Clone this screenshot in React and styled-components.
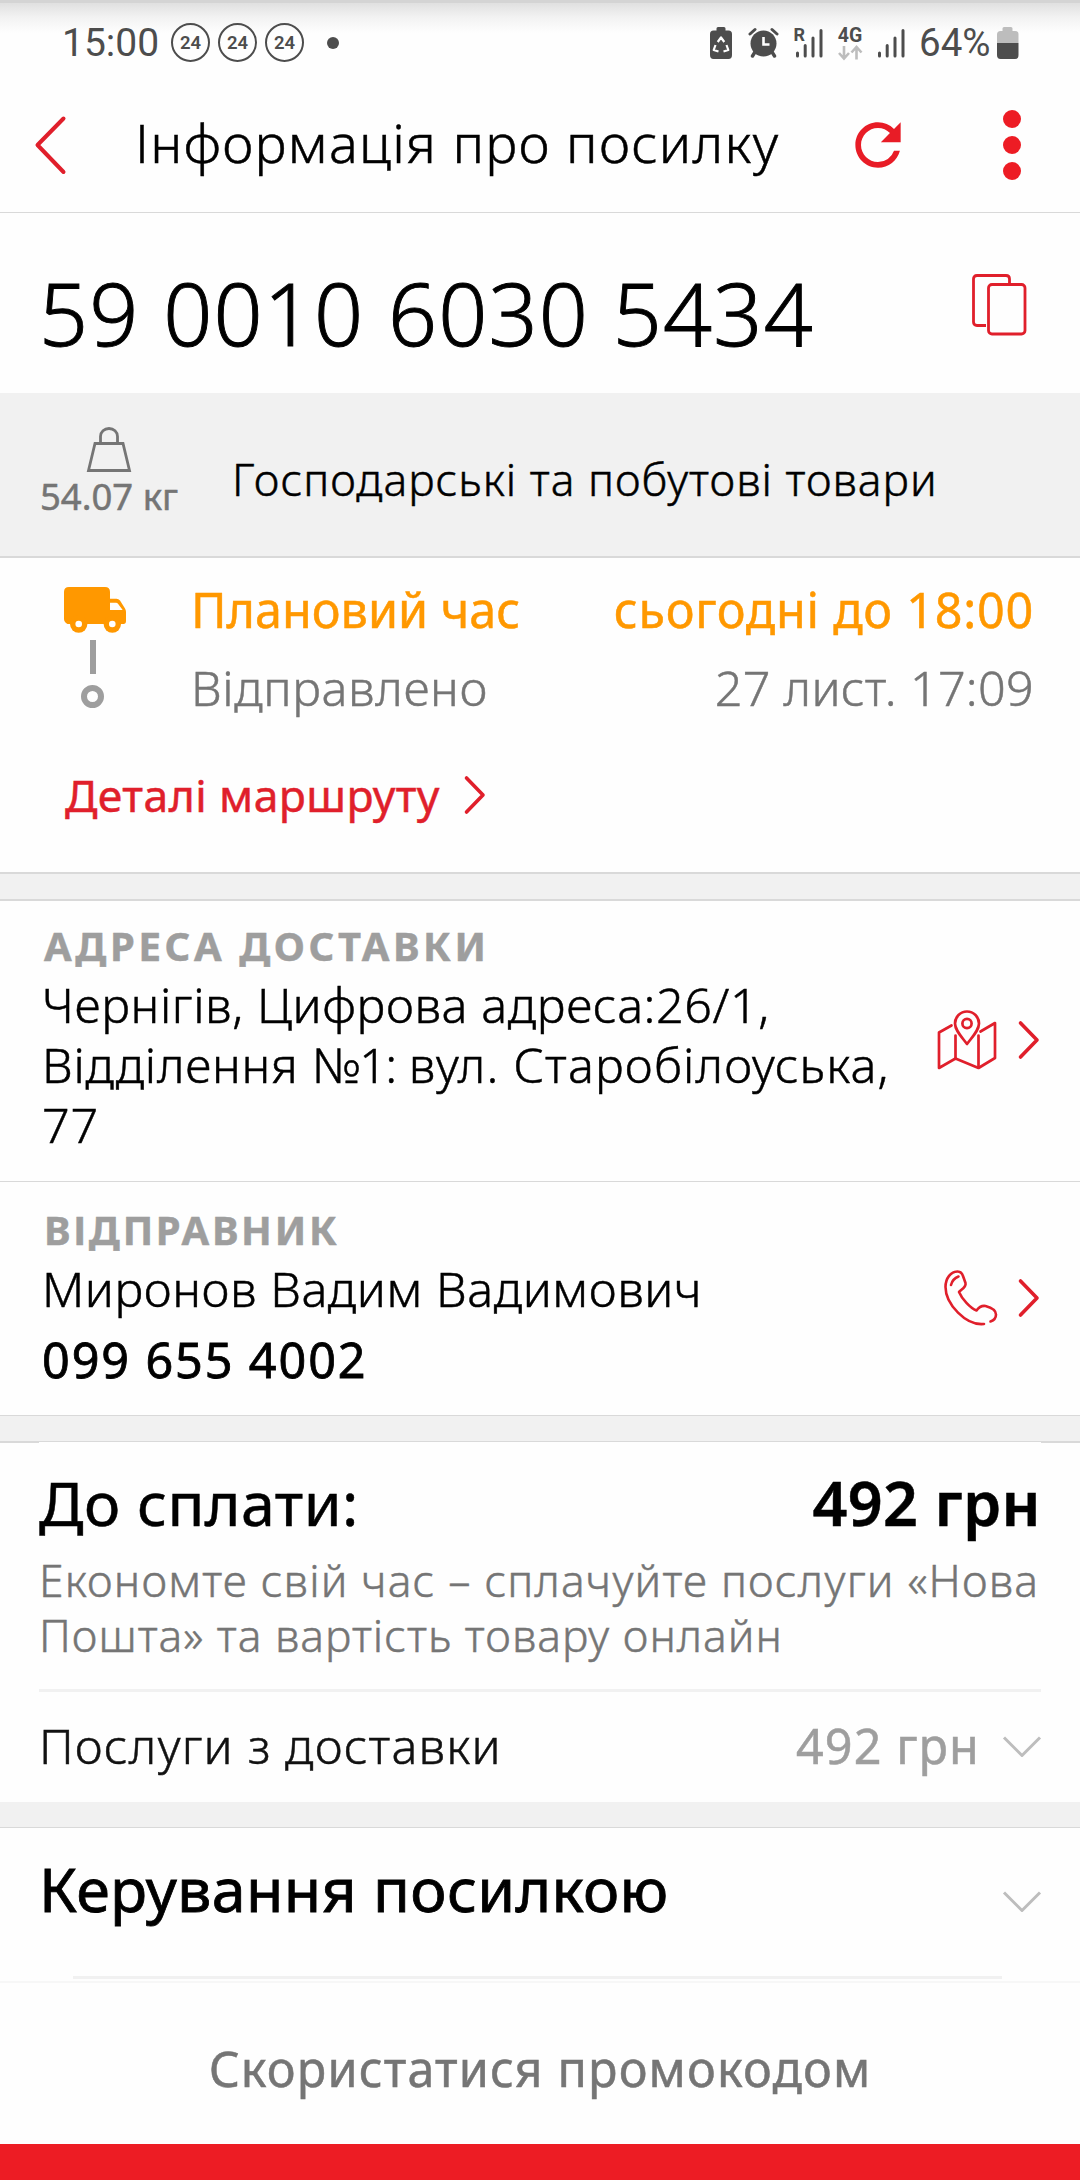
import React from "react"
import styled, { createGlobalStyle } from "styled-components"
import { MdRefresh } from "react-icons/md"

const red = "#e01f2b"
const line = "#d9d9d9"
const band = "#f1f1f1"
const grey = "#757575"
const lightGrey = "#9e9e9e"
const orange = "#ff9800"
const dark = "#4d4d4d"

const ChevronRight = () => (
  <svg width="22" height="40" viewBox="0 0 22 40" fill="none" stroke={red} strokeWidth="3.6" strokeLinecap="round" strokeLinejoin="round">
    <path d="M2.5 3L19 20L2.5 37" />
  </svg>
)

const ChevronDown = () => (
  <svg width="38" height="22" viewBox="0 0 38 22" fill="none" stroke="#bdbdbd" strokeWidth="3" strokeLinejoin="round">
    <path d="M1 1.5L19 19.5L37 1.5" />
  </svg>
)

const Signal = ({ roaming }) => (
  <svg width="30" height="34" viewBox="0 0 30 34">
    <path d="M3.500 27V30M11.200 19.500V30M19 12V30M27 4.500V30" stroke={dark} strokeWidth="3" strokeLinecap="round" />
    {roaming && (
      <text x="-0.500" y="15" fontFamily="Roboto" fontWeight="700" fontSize="18" fill={dark}>R</text>
    )}
  </svg>
)

const App = () => (
  <Screen>
    <GlobalStyle />
    <StatusBar>
      <Clock>15:00</Clock>
      <Notices>
        <Notice>24</Notice>
        <Notice>24</Notice>
        <Notice>24</Notice>
      </Notices>
      <Dot />
      <StatusIcons>
        <svg width="22" height="32" viewBox="0 0 22 32">
          <path d="M6.500 1.500Q6.500 0 8 0H14Q15.500 0 15.500 1.500V3.500H18.500Q22 3.500 22 7V28Q22 32 18.500 32H3.500Q0 32 0 28V7Q0 3.500 3.500 3.500H6.500Z" fill={dark} />
          <path d="M7.700 15L11 10.500L14.300 15M16.500 18L18.300 23L13.500 24.500M8.500 24.500L3.700 23L5.500 18" fill="none" stroke="#fff" strokeWidth="2.2" strokeLinejoin="round" />
        </svg>
        <svg width="29" height="30" viewBox="0 0 29 30">
          <circle cx="14.500" cy="15.500" r="13" fill={dark} />
          <path d="M1 6L6 1.500M28 6L23 1.500" stroke={dark} strokeWidth="3" strokeLinecap="round" />
          <path d="M6 24L3.500 28M23 24L25.500 28" stroke={dark} strokeWidth="3.400" strokeLinecap="round" />
          <path d="M14.500 9V16.500H20.500" fill="none" stroke="#fff" strokeWidth="2.600" />
        </svg>
        <Signal roaming />
        <svg width="27" height="34" viewBox="0 0 27 34">
          <text x="0.800" y="15.500" fontFamily="Roboto" fontWeight="700" fontSize="19.500" fill={dark}>4G</text>
          <path d="M7 20V32M2 27L7 32.500L12 27M19.500 33.500V21M14.500 26.500L19.500 21L24.500 26.500" fill="none" stroke="#bdbdbd" strokeWidth="2.600" />
        </svg>
        <Signal />
        <Percent>64%</Percent>
        <svg width="22" height="32" viewBox="0 0 22 32">
          <path d="M5.500 1.500Q5.500 0 7 0H14Q15.500 0 15.500 1.500V4H18Q21.500 4 21.500 7.500V16H0V7.500Q0 4 3.500 4H5.500Z" fill="#bdbdbd" />
          <path d="M0 16H21.500V28Q21.500 32 18 32H3.500Q0 32 0 28Z" fill={dark} />
        </svg>
      </StatusIcons>
    </StatusBar>

    <Header>
      <svg width="32" height="58" viewBox="0 0 32 58" fill="none" stroke={red} strokeWidth="4" strokeLinecap="round" strokeLinejoin="round">
        <path d="M28.500 2.500L2.500 29L28.500 56" />
      </svg>
      <Title>Інформація про посилку</Title>
      <MdRefresh size={68} color="#e81c26" />
      <Menu>
        <MenuDot />
        <MenuDot />
        <MenuDot />
      </Menu>
    </Header>

    <NumberRow>
      <Number>59 0010 6030 5434</Number>
      <svg width="56" height="62" viewBox="0 0 56 62" fill="none" stroke={red} strokeWidth="2.800">
        <path d="M15 51.500H6Q2.500 51.500 2.500 48V5Q2.500 1.500 6 1.500H35Q38.500 1.500 38.500 5V10" />
        <rect x="17.500" y="10.500" width="36.500" height="49.500" rx="3.500" />
      </svg>
    </NumberRow>

    <Cargo>
      <Weight>
        <svg width="44" height="45" viewBox="0 0 44 45" fill="none" stroke={grey} strokeWidth="2.800">
          <path d="M8 16.500H36L42.500 43.500H1.500Z" />
          <path d="M13.500 16V9.500A8.500 8 0 0 1 30.500 9.500V16" />
        </svg>
        <WeightText>54.07 кг</WeightText>
      </Weight>
      <CargoText>Господарські та побутові товари</CargoText>
    </Cargo>

    <Route>
      <RouteTop>
        <Rail>
          <svg width="62" height="46" viewBox="0 0 62 46">
            <path fillRule="evenodd" fill={orange} d="M5 0H41Q46 0 46 5V11.700H52.500Q54.500 11.700 56 13.500L61 21.500Q62 23 62 25V34Q62 37 59.500 37H3.500Q0 35 0 32V5Q0 0 5 0ZM46 15.800V23H58.700L54 16.800Q53.200 15.800 52 15.800Z" />
            <circle cx="14.700" cy="37" r="8.700" fill={orange} />
            <circle cx="48.300" cy="37" r="8.700" fill={orange} />
            <circle cx="14.700" cy="37" r="3.300" fill="#fff" />
            <circle cx="48.300" cy="37" r="3.300" fill="#fff" />
          </svg>
          <RailLine />
          <RailRing />
        </Rail>
        <Steps>
          <Step $color={orange} $weight={400}>
            <Tracked $track={0}>Плановий час</Tracked>
            <Tracked $track={0.75}>сьогодні до 18:00</Tracked>
          </Step>
          <Step $color={grey} $weight={300}>
            <Tracked $track={0.62}>Відправлено</Tracked>
            <Tracked $track={0.3}>27 лист. 17:09</Tracked>
          </Step>
        </Steps>
      </RouteTop>
      <RouteLink>
        Деталі маршруту
        <ChevronRight />
      </RouteLink>
    </Route>

    <Band $top={2} $bottom={2} />

    <Contact $height={281} $top={21} $border>
      <ContactBody>
        <Label $track={3.6}>АДРЕСА ДОСТАВКИ</Label>
        <Address>
          <Tracked $track={0.6}>Чернігів, Цифрова адреса:26/1,</Tracked> Відділення{" "}
          <Tracked $track={-1.8}>№1:</Tracked> <Tracked $track={1.15}>вул. Старобілоуська,</Tracked> 77
        </Address>
      </ContactBody>
      <Actions $gap={21}>
        <svg width="60" height="60" viewBox="0 0 60 60" fill="none" stroke={red} strokeWidth="2.700" strokeLinecap="round" strokeLinejoin="round">
          <path d="M14.500 15.500L2 22.500V58L18.500 48.500L41.500 58L58 48V13L43.500 21.500" />
          <path d="M18.500 25.500V48M41.500 25.500V57.500" />
          <path d="M30 34C24 26 18 20 18 13.500A12 12 0 0 1 42 13.500C42 20 36 26 30 34Z" />
          <circle cx="30" cy="13.500" r="4.600" />
        </svg>
        <ChevronRight />
      </Actions>
    </Contact>

    <Contact $height={233} $top={23.5}>
      <ContactBody>
        <Label $track={2.73}>ВІДПРАВНИК</Label>
        <Name>Миронов Вадим Вадимович</Name>
        <Phone>099 655 4002</Phone>
      </ContactBody>
      <Actions $gap={20}>
        <svg width="54" height="56" viewBox="0 0 54 56" fill="none" stroke={red} strokeWidth="2.600" strokeLinecap="round" strokeLinejoin="round">
          <path d="M40 54C22 56 1.500 34 1.500 17C1.500 8 7 1.500 13.500 1.500C16.500 1.500 18 3 19 6L21.500 13C22.500 17 18 19 15 22C18 29 26 38 32.500 40.500C35 37 38 35.500 41.500 36C47 37.500 52 40.500 52 44.500C52 48 49.500 50.500 46.500 51.500" />
          <path d="M7 15C8 11 10.500 8 14.500 6.500" />
        </svg>
        <ChevronRight />
      </Actions>
    </Contact>

    <Band $top={1} $bottom={1} />

    <Payment>
      <Total>
        <TotalLabel>До сплати:</TotalLabel>
        <TotalSum>492 грн</TotalSum>
      </Total>
      <Hint>
        Економте свій час – сплачуйте послуги «Нова
        <br />
        <Tracked $track={1}>Пошта» та вартість товару онлайн</Tracked>
      </Hint>
      <Service>
        <ServiceName>Послуги з доставки</ServiceName>
        <ServiceSum>492 грн</ServiceSum>
        <ServiceArrow>
          <ChevronDown />
        </ServiceArrow>
      </Service>
    </Payment>

    <Band $top={0} $bottom={1} />

    <Manage>
      <ManageRow>
        <ManageTitle>Керування посилкою</ManageTitle>
        <ManageArrow>
          <ChevronDown />
        </ManageArrow>
      </ManageRow>
      <ManageLine />
    </Manage>

    <Promo>Скористатися промокодом</Promo>
    <BottomBar />
  </Screen>
)

export default App

const GlobalStyle = createGlobalStyle`
  * {
    box-sizing: border-box;
  }

  body {
    margin: 0;
    background: #fefefe;
    font-family: "Noto Sans", sans-serif;
    font-weight: 300;
    color: #000;
    white-space: nowrap;
    -webkit-text-stroke: 0.5px;
  }

  svg {
    display: block;
    flex: none;
    overflow: visible;
    -webkit-text-stroke: 0;
  }
`

const Screen = styled.div`
  width: 1080px;
  height: 2180px;
  overflow: hidden;
  display: flex;
  flex-direction: column;
`

const StatusBar = styled.div`
  height: 85px;
  flex: none;
  display: flex;
  align-items: center;
  padding: 0 61px 3px 62px;
  border-top: 3px solid #d4d4d4;
  background: linear-gradient(#e0e0e0, #f2f2f2 14px, #fefefe 30px);
  font-family: Roboto, sans-serif;
  font-weight: 400;
  color: ${dark};
  -webkit-text-stroke: 0;
`

const Clock = styled.div`
  width: 109px;
  font-size: 39px;
  line-height: 40px;
`

const Notices = styled.div`
  display: flex;
  gap: 8px;
`

const Notice = styled.div`
  width: 39px;
  height: 39px;
  border: 2px solid ${dark};
  border-radius: 50%;
  font-size: 18.5px;
  font-weight: 600;
  line-height: 36px;
  text-align: center;
`

const Dot = styled.div`
  width: 12px;
  height: 12px;
  margin-left: 23px;
  border-radius: 50%;
  background: ${dark};
`

const StatusIcons = styled.div`
  display: grid;
  grid-template-columns: 39px 45px 43px 39px 43px 78px 22px;
  align-items: center;
  margin-left: auto;
`

const Percent = styled.div`
  font-size: 38.5px;
  line-height: 40px;
`

const Header = styled.header`
  height: 128px;
  flex: none;
  display: flex;
  align-items: center;
  padding: 0 59px 7px 35px;
  border-bottom: 1px solid ${line};
`

const Title = styled.h1`
  width: 777px;
  margin: 0 0 6px;
  padding-left: 68px;
  font-size: 54px;
  font-weight: 300;
  line-height: 70px;
  letter-spacing: 1.25px;
`

const Menu = styled.div`
  display: flex;
  flex-direction: column;
  gap: 8px;
  margin-left: auto;
`

const MenuDot = styled.div`
  width: 18px;
  height: 18px;
  border-radius: 50%;
  background: #ed1c24;
`

const NumberRow = styled.div`
  height: 180px;
  flex: none;
  display: flex;
  align-items: center;
  justify-content: space-between;
  padding: 4px 53px 0 39px;
`

const Number = styled.div`
  padding-top: 15px;
  font-size: 86px;
  line-height: 100px;
  letter-spacing: 1.2px;
  -webkit-text-stroke: 0.9px;
`

const Cargo = styled.div`
  height: 165px;
  flex: none;
  display: flex;
  padding-left: 39px;
  background: ${band};
  border-bottom: 2px solid ${line};
`

const Weight = styled.div`
  width: 140px;
  display: flex;
  flex-direction: column;
  align-items: center;
  padding-top: 34px;
  color: ${grey};
`

const WeightText = styled.div`
  margin-top: 4px;
  font-size: 36.5px;
  font-weight: 400;
  line-height: 40px;
`

const CargoText = styled.div`
  margin: 56px 0 0 53px;
  font-size: 44.5px;
  line-height: 60px;
  letter-spacing: 1px;
`

const Route = styled.section`
  height: 314px;
  flex: none;
  padding: 12px 46px 0 64px;
`

const RouteTop = styled.div`
  display: flex;
`

const Rail = styled.div`
  width: 62px;
  display: flex;
  flex-direction: column;
  align-items: center;
  padding-top: 17px;
`

const RailLine = styled.div`
  width: 6px;
  height: 34px;
  margin: 7px 4px 11px 0;
  background: ${lightGrey};
`

const RailRing = styled.div`
  width: 23px;
  height: 23px;
  margin-right: 5px;
  border: 6px solid ${lightGrey};
  border-radius: 50%;
`

const Steps = styled.div`
  flex: 1;
  padding-left: 65px;
`

const Step = styled.div`
  display: flex;
  justify-content: space-between;
  font-size: 48.5px;
  font-weight: ${(p) => p.$weight};
  line-height: 78px;
  color: ${(p) => p.$color};
`

const Tracked = styled.span`
  letter-spacing: ${(p) => p.$track}px;
`

const RouteLink = styled.div`
  display: flex;
  align-items: center;
  gap: 24px;
  margin-top: 39px;
  padding-left: 1px;
  font-size: 44.5px;
  font-weight: 400;
  line-height: 60px;
  letter-spacing: 0.42px;
  color: ${red};
`

const Band = styled.div`
  height: ${(p) => 25 + p.$top + p.$bottom}px;
  flex: none;
  background: ${band};
  border-style: solid;
  border-color: ${line};
  border-width: ${(p) => p.$top}px 0 ${(p) => p.$bottom}px;
`

const Contact = styled.section`
  height: ${(p) => p.$height}px;
  flex: none;
  display: flex;
  justify-content: space-between;
  padding: 0 40px 0 42px;
  border-bottom: ${(p) => (p.$border ? 1 : 0)}px solid ${line};

  > :first-child {
    padding-top: ${(p) => p.$top}px;
  }
`

const ContactBody = styled.div`
  width: 870px;
`

const Label = styled.div`
  padding-left: 2px;
  font-size: 40px;
  font-weight: 700;
  line-height: 48px;
  letter-spacing: ${(p) => p.$track}px;
  color: ${lightGrey};
`

const Address = styled.div`
  margin-top: 4px;
  font-size: 48.5px;
  line-height: 60px;
  letter-spacing: 0.75px;
  white-space: normal;
`

const Name = styled.div`
  margin-top: 4px;
  font-size: 48.5px;
  line-height: 60px;
  letter-spacing: 0.55px;
`

const Phone = styled.div`
  margin-top: 11px;
  font-size: 48.5px;
  font-weight: 400;
  line-height: 60px;
  letter-spacing: 1.9px;
  -webkit-text-stroke: 0.8px;
`

const Actions = styled.div`
  display: flex;
  align-items: center;
  gap: ${(p) => p.$gap}px;
  padding-bottom: 2px;
`

const Payment = styled.section`
  height: 360px;
  flex: none;
  padding: 25px 39px 0;
  background:
    linear-gradient(${line}, ${line}) 0 0 / 39px 1px no-repeat,
    linear-gradient(${line}, ${line}) 100% 0 / 39px 1px no-repeat;
`

const Total = styled.div`
  display: flex;
  justify-content: space-between;
  font-size: 61px;
  line-height: 72px;
`

const TotalLabel = styled.span`
  font-weight: 400;
  letter-spacing: 0.45px;
`

const TotalSum = styled.span`
  font-weight: 600;
  letter-spacing: 0.37px;
`

const Hint = styled.div`
  margin-top: 13px;
  padding-bottom: 27px;
  border-bottom: 3px solid ${band};
  font-size: 44.5px;
  line-height: 55px;
  letter-spacing: 1.17px;
  color: ${grey};
`

const Service = styled.div`
  display: flex;
  align-items: center;
  margin-top: 23px;
  font-size: 48.5px;
  line-height: 60px;
`

const ServiceName = styled.span`
  flex: 1;
  letter-spacing: 1.15px;
  color: #111;
`

const ServiceSum = styled.span`
  margin-right: 23px;
  font-weight: 400;
  letter-spacing: 1.1px;
  color: ${lightGrey};
`

const ServiceArrow = styled.div`
  padding-top: 4px;
`

const Manage = styled.section`
  height: 153px;
  flex: none;
  padding-top: 25px;
`

const ManageRow = styled.div`
  display: flex;
  justify-content: space-between;
  padding: 0 39px;
`

const ManageArrow = styled.div`
  padding-top: 38px;
`

const ManageTitle = styled.h2`
  margin: 0;
  font-size: 61px;
  font-weight: 400;
  line-height: 72px;
  letter-spacing: 0.3px;
  -webkit-text-stroke: 0.8px;
`

const ManageLine = styled.div`
  height: 3px;
  margin: 51px 78px 0 73px;
  background: ${band};
`

const Promo = styled.div`
  height: 163px;
  flex: none;
  padding-top: 6px;
  border-top: 2px solid #f7f7f7;
  font-size: 48.5px;
  font-weight: 400;
  line-height: 158px;
  letter-spacing: 1.15px;
  text-align: center;
  color: ${grey};
`

const BottomBar = styled.div`
  flex: 1;
  background: #ed1c24;
`
